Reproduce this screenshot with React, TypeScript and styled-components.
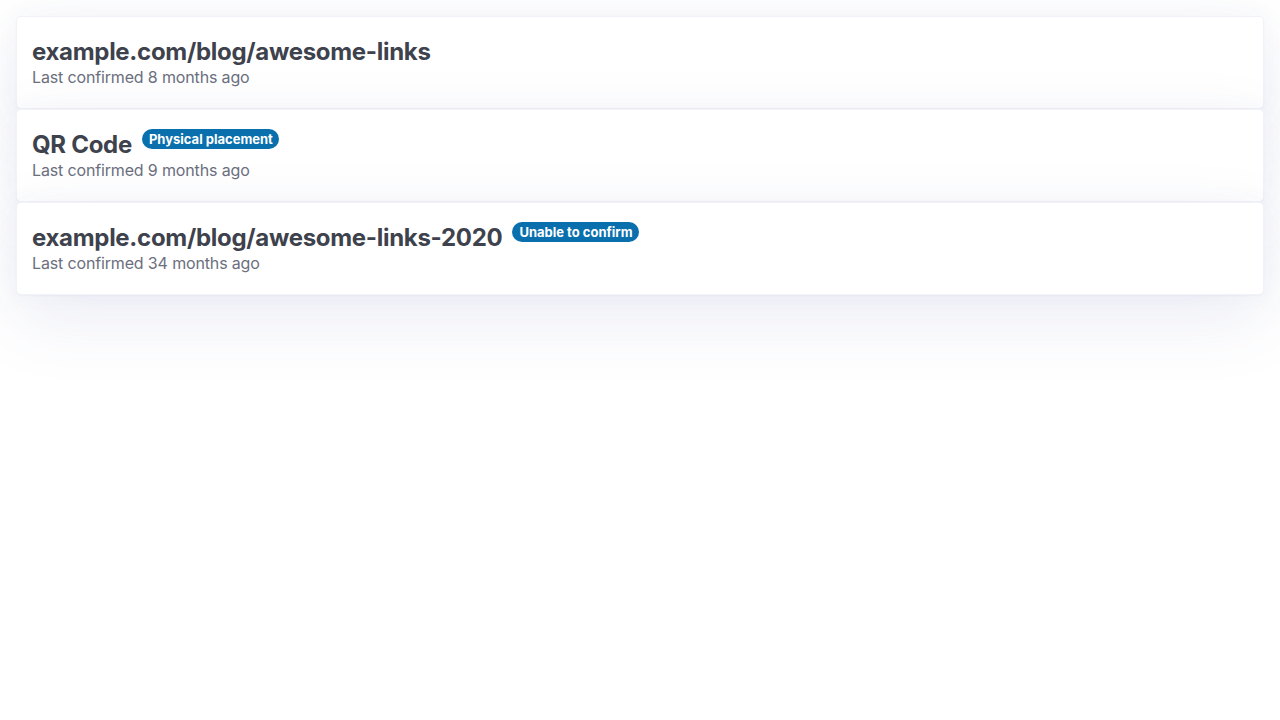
import React from "react";
import styled, { createGlobalStyle } from "styled-components";

const Global = createGlobalStyle`
  html, body { margin: 0; padding: 0; background: #ffffff; }
  body { font-family: Inter, "Noto Sans", sans-serif; -webkit-font-smoothing: antialiased; }
`;

const Page = styled.main`
  box-sizing: border-box;
  min-height: 100vh;
  padding: 16px;
`;

const List = styled.ul`
  list-style: none;
  margin: 0;
  padding: 0;
  display: flex;
  flex-direction: column;
`;

const Card = styled.li`
  background: #ffffff;
  border: 1px solid rgba(230, 232, 242, 0.5);
  border-radius: 5px;
  padding: 21px 15px 19px;
  box-shadow: 0 24px 70px rgba(70, 74, 160, 0.1), 0 0 24px rgba(70, 74, 160, 0.04),
    0 1px 2px rgba(60, 64, 120, 0.04);
`;

const TitleRow = styled.div`
  display: flex;
  align-items: flex-start;
  gap: 10px;
`;

const Title = styled.h2`
  margin: 0;
  font-size: 24px;
  line-height: 27px;
  font-weight: 700;
  color: #3e424d;
  letter-spacing: -0.3px;
`;

const Badge = styled.span`
  display: inline-flex;
  align-items: center;
  height: 20px;
  margin-top: -2px;
  padding: 0 6px 0 7px;
  border-radius: 999px;
  background: #0a6fad;
  color: #ffffff;
  font-size: 13px;
  font-weight: 700;
  white-space: nowrap;
`;

const Meta = styled.p`
  margin: 0;
  font-size: 16px;
  line-height: 24px;
  color: #6b6f7e;
  letter-spacing: -0.15px;
`;

const items = [
  { title: "example.com/blog/awesome-links", meta: "Last confirmed 8 months ago" },
  { title: "QR Code", badge: "Physical placement", meta: "Last confirmed 9 months ago" },
  { title: "example.com/blog/awesome-links-2020", badge: "Unable to confirm", meta: "Last confirmed 34 months ago" },
];

export default function App() {
  return (
    <Page>
      <Global />
      <List>
        {items.map((it) => (
          <Card key={it.title}>
            <TitleRow>
              <Title>{it.title}</Title>
              {it.badge && <Badge>{it.badge}</Badge>}
            </TitleRow>
            <Meta>{it.meta}</Meta>
          </Card>
        ))}
      </List>
    </Page>
  );
}
